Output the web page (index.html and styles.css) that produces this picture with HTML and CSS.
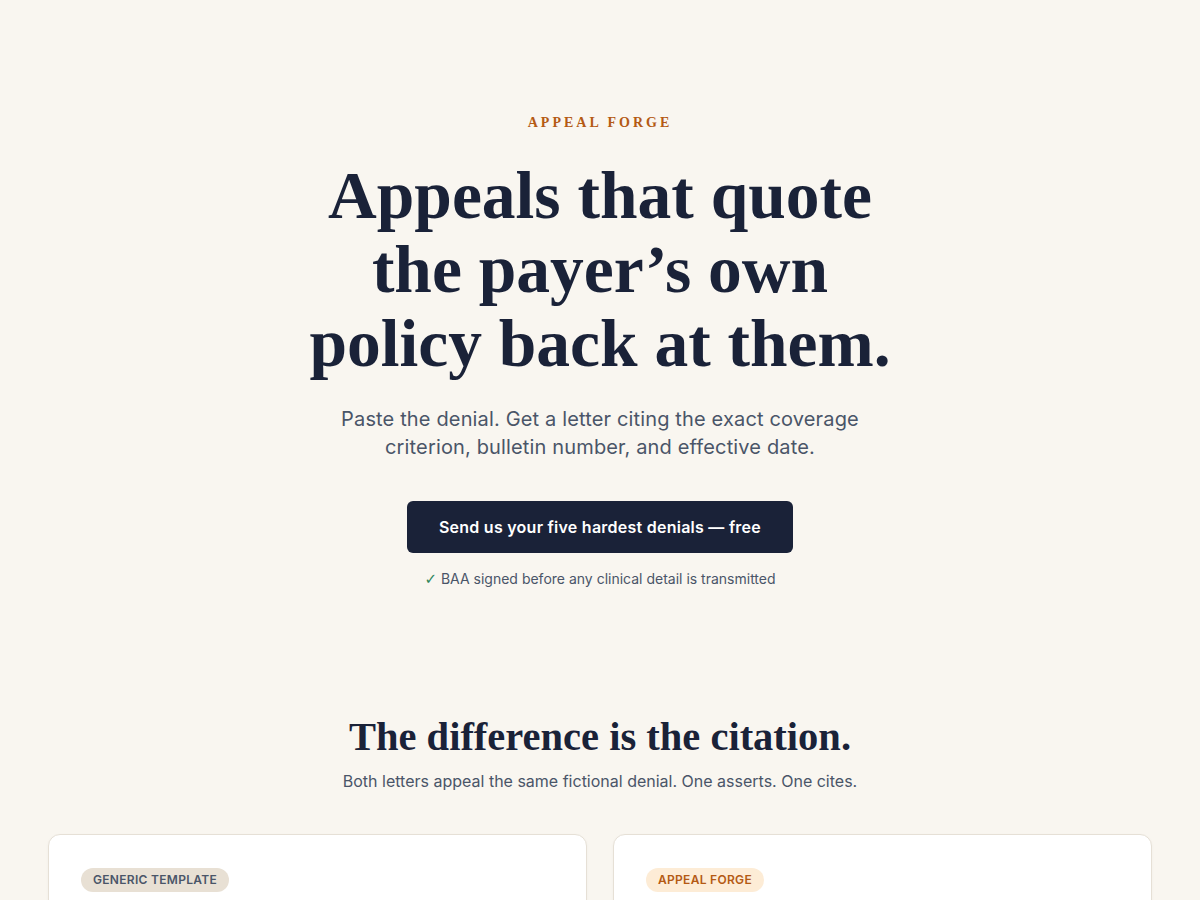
FILE: index.html
```html
<!DOCTYPE html>
<html lang="en">
<head>
<meta charset="utf-8">
<title>Appeal Forge</title>
<link rel="stylesheet" href="styles.css">
</head>
<body>
<main class="page">
  <section class="hero">
    <div class="eyebrow">APPEAL FORGE</div>
    <h1 class="hero-title">Appeals that quote<br>the payer’s own<br>policy back at them.</h1>
    <p class="hero-sub">Paste the denial. Get a letter citing the exact coverage criterion, bulletin number, and effective date.</p>
    <a class="cta" href="#">Send us your five hardest denials — free</a>
    <p class="note"><span class="check">✓</span> BAA signed before any clinical detail is transmitted</p>
  </section>
  <section class="compare">
    <h2 class="compare-title">The difference is the citation.</h2>
    <p class="compare-sub">Both letters appeal the same fictional denial. One asserts. One cites.</p>
    <div class="cards">
      <article class="card">
        <span class="badge badge-generic">GENERIC TEMPLATE</span>
      </article>
      <article class="card">
        <span class="badge badge-forge">APPEAL FORGE</span>
      </article>
    </div>
  </section>
</main>
</body>
</html>
```
FILE: styles.css
```css
* { box-sizing: border-box; }
html, body { margin: 0; padding: 0; }
body {
  background: #f9f6f0;
  font-family: Inter, "Liberation Sans", sans-serif;
  color: #1a2238;
}
.page { display: flex; flex-direction: column; align-items: center; }
.hero {
  display: flex;
  flex-direction: column;
  align-items: center;
  padding-top: 113px;
  text-align: center;
}
.eyebrow {
  font-family: "Liberation Serif", serif;
  font-weight: 700;
  font-size: 14px;
  line-height: 20px;
  letter-spacing: 3px;
  color: #b45a14;
}
.hero-title {
  margin: 26px 0 0;
  font-family: "Liberation Serif", serif;
  font-weight: 700;
  font-size: 67.5px;
  line-height: 74px;
  color: #1a2238;
}
.hero-sub {
  margin: 24px 0 0;
  max-width: 570px;
  font-size: 20px;
  line-height: 28px;
  letter-spacing: 0.15px;
  color: #4a5568;
}
.cta {
  margin-top: 40px;
  display: inline-flex;
  align-items: center;
  justify-content: center;
  height: 52px;
  padding: 0 32px;
  background: #1a2238;
  color: #fff;
  border-radius: 6px;
  font-size: 16px;
  font-weight: 600;
  letter-spacing: 0.25px;
  text-decoration: none;
}
.note {
  margin: 16px 0 0;
  font-size: 14px;
  line-height: 20px;
  color: #4a5568;
}
.check {
  font-family: "DejaVu Sans", sans-serif;
  font-size: 15px;
  color: #2f855a;
}
.compare {
  width: 100%;
  display: flex;
  flex-direction: column;
  align-items: center;
  padding-top: 124px;
  text-align: center;
}
.compare-title {
  margin: 0;
  font-family: "Liberation Serif", serif;
  font-weight: 700;
  font-size: 40.5px;
  line-height: 48px;
  color: #1a2238;
}
.compare-sub {
  margin: 8px 0 0;
  font-size: 16px;
  line-height: 24px;
  color: #4a5568;
}
.cards {
  margin-top: 41px;
  width: 1104px;
  display: grid;
  grid-template-columns: 1fr 1fr;
  gap: 26px;
  text-align: left;
}
.card {
  background: #fff;
  border: 1px solid #e6e0d6;
  border-radius: 12px;
  padding: 33px 32px;
  min-height: 200px;
  box-shadow: 0 1px 3px rgba(0,0,0,0.04);
}
.badge {
  display: inline-block;
  height: 24px;
  line-height: 24px;
  padding: 0 12px;
  border-radius: 12px;
  font-size: 12px;
  font-weight: 600;
  letter-spacing: 0.3px;
}
.badge-generic { background: #e8e0d4; color: #4a5568; }
.badge-forge { background: #fdecd6; color: #b45a14; }
```
